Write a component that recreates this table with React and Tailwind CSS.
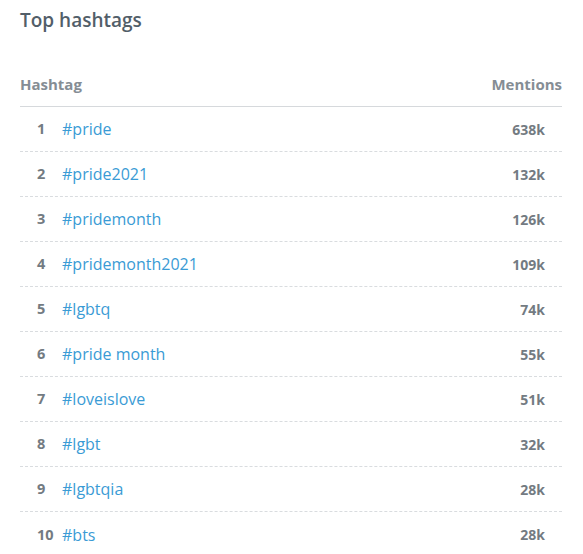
const rows = [
  ["1", "#pride", "638k"],
  ["2", "#pride2021", "132k"],
  ["3", "#pridemonth", "126k"],
  ["4", "#pridemonth2021", "109k"],
  ["5", "#lgbtq", "74k"],
  ["6", "#pride month", "55k"],
  ["7", "#loveislove", "51k"],
  ["8", "#lgbt", "32k"],
  ["9", "#lgbtqia", "28k"],
  ["10", "#bts", "28k"],
];

export default function App() {
  return (
    <div className="w-[583px] h-[554px] bg-white overflow-hidden pl-5 pr-[21px]" style={{ fontFamily: '"Open Sans", sans-serif' }}>
      <h2 className="pt-[7px] text-[19px] leading-[26px] font-semibold text-[#525e69]">Top hashtags</h2>
      <div className="mt-[40px] flex items-center justify-between h-[34px] pb-[11px] border-b border-[#d6d9dc] text-[15px] font-bold text-[#858d94]">
        <span>Hashtag</span>
        <span>Mentions</span>
      </div>
      {rows.map(([n, tag, m], i) => (
        <div
          key={n}
          className={`flex items-center h-[45px] ${i < rows.length - 1 ? "border-b border-dashed border-[#d9dcdf]" : ""}`}
        >
          <span className="w-[42px] pl-[17px] font-bold text-[#737b82] text-[14.5px]">{n}</span>
          <span className="flex-1 text-[16px] text-[#3a9bd5]">{tag}</span>
          <span className="pr-[17px] font-bold text-[#737b82] text-[14px]">{m}</span>
        </div>
      ))}
    </div>
  );
}
